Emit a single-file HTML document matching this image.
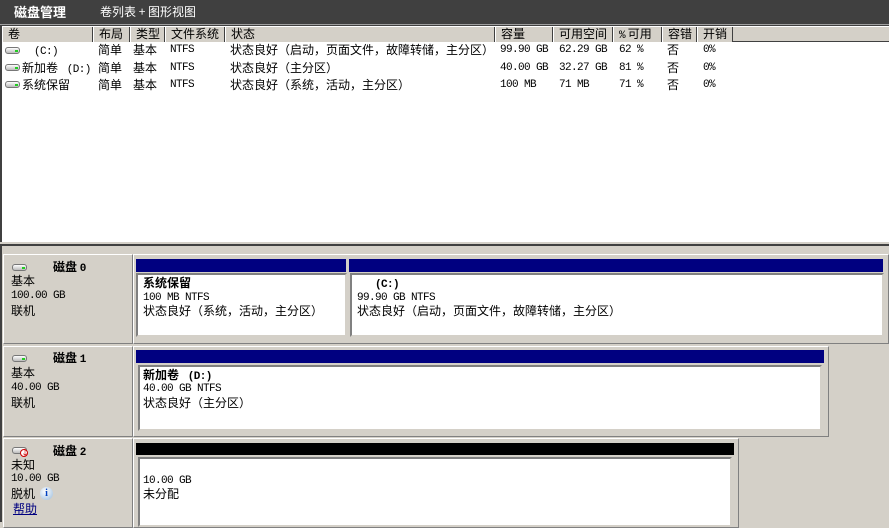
<!DOCTYPE html>
<html><head><meta charset="utf-8"><style>
*{margin:0;padding:0;box-sizing:border-box}
body{width:889px;height:522px;overflow:hidden;background:#d4d0c8;position:relative;font:12px "Noto Sans CJK SC","WenQuanYi Zen Hei",sans-serif;color:#000}
.a{position:absolute;white-space:nowrap;line-height:14px}
.m{font-family:"Liberation Mono",monospace;font-size:11px;letter-spacing:-0.6px}
.b{font-weight:bold}
.hd{position:absolute;top:27px;height:15px;background:#d4d0c8;border-right:1px solid #404040;border-left:1px solid #fff;padding-left:5px;line-height:14px;font-size:12px}
.icon{position:absolute;width:15px;height:7px;border:1px solid #777;border-radius:3px;background:linear-gradient(#fff,#bbb)}
.icon:after{content:"";position:absolute;right:1px;top:2px;width:3px;height:2px;background:#2c2}
.box{position:absolute;background:#d4d0c8;border:1px solid #fff;border-right-color:#808080;border-bottom-color:#808080}
.w{position:absolute;background:#fff;border:2px solid #808080;border-right-color:#d4d0c8;border-bottom-color:#d4d0c8}
.bar{position:absolute;height:13px;background:#000080}
</style></head><body>
<div style="position:absolute;left:0;top:0;width:889px;height:25px;background:#404040;border-bottom:1px solid #a0a0a0"></div>
<div class="a b" style="left:14px;top:5px;color:#fff;font-size:13px">磁盘管理</div>
<div class="a" style="left:100px;top:5px;color:#fff">卷列表 + 图形视图</div>
<div style="position:absolute;left:0;top:25px;width:889px;height:217px;background:#fff;border-top:1px solid #404040;border-left:2px solid #404040"></div>
<div style="position:absolute;left:2px;top:27px;width:887px;height:15px;background:#d4d0c8;border-bottom:1px solid #404040"></div>
<div class="hd" style="left:2px;width:91px">卷</div>
<div class="hd" style="left:93px;width:37px">布局</div>
<div class="hd" style="left:130px;width:35px">类型</div>
<div class="hd" style="left:165px;width:60px">文件系统</div>
<div class="hd" style="left:225px;width:270px">状态</div>
<div class="hd" style="left:495px;width:58px">容量</div>
<div class="hd" style="left:553px;width:60px">可用空间</div>
<div class="hd" style="left:613px;width:49px"><span class="m">%</span> 可用</div>
<div class="hd" style="left:662px;width:35px">容错</div>
<div class="hd" style="left:697px;width:36px">开销</div>

<div class="icon" style="left:5px;top:47px"></div>
<div class="icon" style="left:5px;top:64px"></div>
<div class="icon" style="left:5px;top:81px"></div>
<div class="a" style="left:22px;top:43px"><span class="m">&nbsp;&nbsp;(C:)</span></div>
<div class="a" style="left:22px;top:61px">新加卷 <span class="m">&nbsp;(D:)</span></div>
<div class="a" style="left:22px;top:78px">系统保留</div>
<div class="a" style="left:98px;top:43px">简单</div><div class="a" style="left:98px;top:61px">简单</div><div class="a" style="left:98px;top:78px">简单</div>
<div class="a" style="left:133px;top:43px">基本</div><div class="a" style="left:133px;top:61px">基本</div><div class="a" style="left:133px;top:78px">基本</div>
<div class="a m" style="left:170px;top:43px">NTFS</div><div class="a m" style="left:170px;top:61px">NTFS</div><div class="a m" style="left:170px;top:78px">NTFS</div>
<div class="a" style="left:230px;top:43px">状态良好（启动，页面文件，故障转储，主分区）</div>
<div class="a" style="left:230px;top:61px">状态良好（主分区）</div>
<div class="a" style="left:230px;top:78px">状态良好（系统，活动，主分区）</div>
<div class="a m" style="left:500px;top:43px">99.90 GB</div><div class="a m" style="left:500px;top:61px">40.00 GB</div><div class="a m" style="left:500px;top:78px">100 MB</div>
<div class="a m" style="left:559px;top:43px">62.29 GB</div><div class="a m" style="left:559px;top:61px">32.27 GB</div><div class="a m" style="left:559px;top:78px">71 MB</div>
<div class="a m" style="left:619px;top:43px">62 %</div><div class="a m" style="left:619px;top:61px">81 %</div><div class="a m" style="left:619px;top:78px">71 %</div>
<div class="a" style="left:667px;top:43px">否</div><div class="a" style="left:667px;top:61px">否</div><div class="a" style="left:667px;top:78px">否</div>
<div class="a m" style="left:703px;top:43px">0%</div><div class="a m" style="left:703px;top:61px">0%</div><div class="a m" style="left:703px;top:78px">0%</div>

<div style="position:absolute;left:0;top:242px;width:889px;height:2px;background:#d4d0c8"></div>
<div style="position:absolute;left:0;top:244px;width:889px;height:2px;background:#404040"></div>
<div style="position:absolute;left:0;top:246px;width:2px;height:276px;background:#404040"></div>

<!-- disk 0 -->
<div class="box" style="left:3px;top:254px;width:130px;height:90px"></div>
<div class="box" style="left:133px;top:254px;width:756px;height:90px"></div>
<div class="icon" style="left:12px;top:264px"></div>
<div class="a b" style="left:53px;top:260px">磁盘 <span class="m b">0</span></div>
<div class="a" style="left:11px;top:274px">基本</div>
<div class="a m" style="left:11px;top:289px">100.00 GB</div>
<div class="a" style="left:11px;top:304px">联机</div>
<div class="bar" style="left:136px;top:259px;width:210px"></div>
<div class="w" style="left:136px;top:273px;width:211px;height:64px"></div>
<div class="a b" style="left:143px;top:276px">系统保留</div>
<div class="a m" style="left:143px;top:291px">100 MB NTFS</div>
<div class="a" style="left:143px;top:304px">状态良好（系统，活动，主分区）</div>
<div class="bar" style="left:349px;top:259px;width:534px"></div>
<div class="w" style="left:350px;top:273px;width:534px;height:64px"></div>
<div class="a b" style="left:357px;top:276px"><span class="m b">&nbsp;&nbsp;&nbsp;(C:)</span></div>
<div class="a m" style="left:357px;top:291px">99.90 GB NTFS</div>
<div class="a" style="left:357px;top:304px">状态良好（启动，页面文件，故障转储，主分区）</div>

<!-- disk 1 -->
<div class="box" style="left:3px;top:346px;width:130px;height:91px"></div>
<div class="box" style="left:133px;top:346px;width:696px;height:91px"></div>
<div class="icon" style="left:12px;top:355px"></div>
<div class="a b" style="left:53px;top:351px">磁盘 <span class="m b">1</span></div>
<div class="a" style="left:11px;top:366px">基本</div>
<div class="a m" style="left:11px;top:381px">40.00 GB</div>
<div class="a" style="left:11px;top:396px">联机</div>
<div class="bar" style="left:136px;top:350px;width:688px"></div>
<div class="w" style="left:138px;top:365px;width:684px;height:66px"></div>
<div class="a b" style="left:143px;top:368px">新加卷 <span class="m b">&nbsp;(D:)</span></div>
<div class="a m" style="left:143px;top:382px">40.00 GB NTFS</div>
<div class="a" style="left:143px;top:396px">状态良好（主分区）</div>

<!-- disk 2 -->
<div class="box" style="left:3px;top:438px;width:130px;height:90px"></div>
<div class="box" style="left:133px;top:438px;width:606px;height:90px"></div>
<div class="icon" style="left:12px;top:447px"></div>
<div style="position:absolute;left:20px;top:449px;width:8px;height:8px;border-radius:50%;background:#fff;border:1px solid #c00;color:#c00;font-size:8px;line-height:6px;text-align:center">↓</div>
<div class="a b" style="left:53px;top:444px">磁盘 <span class="m b">2</span></div>
<div class="a" style="left:11px;top:458px">未知</div>
<div class="a m" style="left:11px;top:472px">10.00 GB</div>
<div class="a" style="left:11px;top:487px">脱机</div>
<div style="position:absolute;left:40px;top:487px;width:13px;height:13px;border-radius:50%;background:radial-gradient(circle at 40% 35%,#fff,#9bd);color:#0040c0;font:bold 10px 'Liberation Serif',serif;text-align:center;line-height:13px">i</div>
<div class="a" style="left:13px;top:502px;color:#000080;text-decoration:underline">帮助</div>
<div style="position:absolute;left:136px;top:443px;width:598px;height:12px;background:#000"></div>
<div class="w" style="left:138px;top:457px;width:594px;height:70px"></div>
<div class="a m" style="left:143px;top:474px">10.00 GB</div>
<div class="a" style="left:143px;top:487px">未分配</div>
</body></html>
